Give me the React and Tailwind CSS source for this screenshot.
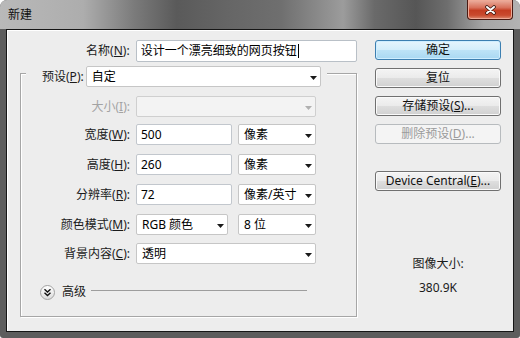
import React from "react";

function Key({ children }) {
  return <span className="underline underline-offset-[1px]">{children}</span>;
}

function Arrow({ disabled }) {
  return (
    <svg width="7" height="4" viewBox="0 0 7 4" className="mt-[2px] shrink-0">
      <path d="M0 0H7L3.5 4Z" fill={disabled ? "#b0b0b0" : "#1a1a1a"} />
    </svg>
  );
}

function Select({ className = "", children, disabled }) {
  return (
    <div
      className={`flex h-[21px] items-center justify-between rounded-[2px] border pl-[5px] pr-[3px] ${
        disabled ? "border-[#cfcfcf] bg-[#f3f3f3]" : "border-[#c6c6c6] bg-white"
      } ${className}`}
    >
      <span className="whitespace-nowrap">{children}</span>
      <Arrow disabled={disabled} />
    </div>
  );
}

function Field({ className = "", children }) {
  return (
    <div
      className={`flex h-[21px] items-center rounded-[2px] border border-[#c2c7cd] bg-white pl-[4px] ${className}`}
    >
      {children}
    </div>
  );
}

function Row({ label, disabled, className = "", children }) {
  return (
    <div className={`flex h-[21px] items-center ${className}`}>
      <div
        className={`w-[109px] whitespace-nowrap text-right ${
          disabled ? "text-[#a3a3a3]" : "text-[#1b1b1b]"
        }`}
      >
        {label}
      </div>
      <div className="ml-[6px] flex items-center">{children}</div>
    </div>
  );
}

function Button({ variant = "normal", className = "", children }) {
  const look = {
    primary:
      "border-[#3c7fb1] bg-[linear-gradient(#e6f5fd_0%,#d4eefb_48%,#bde3f7_52%,#a9d8f2_100%)] shadow-[inset_0_0_0_1px_#cfeeff] text-[#111]",
    normal:
      "border-[#707070] bg-[linear-gradient(#f4f4f4_0%,#ebebeb_48%,#dedede_52%,#d0d0d0_100%)] shadow-[inset_0_0_0_1px_#fafafa] text-[#111]",
    disabled: "border-[#b7bbbe] bg-[#f4f4f4] text-[#9b9b9b]",
  };
  return (
    <div
      className={`flex h-[20px] w-[126px] items-center justify-center rounded-[3px] border leading-[16px] ${look[variant]} ${className}`}
    >
      {children}
    </div>
  );
}

export default function App() {
  return (
    <div className="h-[338px] w-[520px] bg-white font-['Noto_Sans','Noto_Sans_CJK_SC',sans-serif] text-[12px] leading-[16px]">
      <div className="flex h-full flex-col overflow-hidden rounded-t-[7px] rounded-b-[3px] bg-[#5d5d5d]">
        {/* title bar */}
        <div className="flex h-[29px] shrink-0 items-start justify-between bg-[linear-gradient(90deg,#b9b9b9_0%,#adadad_16%,#7a7a7a_26%,#5a5a5a_34%,#666666_44%,#6f6f6f_54%,#9c9c9c_66%,#6a6a6a_72%,#565656_80%,#6e6e6e_86%,#a6a6a6_93%,#b3b3b3_100%)]">
          <div className="pl-[8px] pt-[7px] text-[#111]">新建</div>
          <div className="mr-[7px] flex h-[20px] w-[46px] items-center justify-center rounded-b-[4px] border border-t-0 border-[#4a1a12] bg-[linear-gradient(#ecb1a1_0%,#d8705a_40%,#c43d22_55%,#c94a2e_80%,#dc8a70_100%)] shadow-[inset_0_0_0_1px_#eea996]">
            <svg width="11" height="10" viewBox="0 0 11 10">
              <path d="M2 2L9 8M9 2L2 8" stroke="#3b1a14" strokeWidth="3.6" strokeLinecap="round" />
              <path d="M2 2L9 8M9 2L2 8" stroke="#ffffff" strokeWidth="2" strokeLinecap="round" />
            </svg>
          </div>
        </div>

        {/* frame body */}
        <div className="flex flex-1 px-[6px] pb-[6px]">
          <div className="flex flex-1 border border-[#161616] bg-[#ededed] shadow-[inset_1px_1px_0_#ffffff]">
            {/* left side */}
            <div className="flex w-[350px] flex-col">
              <div className="mt-[10px] flex h-[22px] items-center">
                <div className="w-[123px] text-right text-[#1b1b1b]">
                  名称(<Key>N</Key>):
                </div>
                <div className="ml-[6px] flex h-[22px] w-[222px] items-center rounded-[2px] border border-[#b9c0c7] bg-white pl-[4px]">
                  <span className="whitespace-nowrap">设计一个漂亮细致的网页按钮</span>
                  <span className="ml-px h-[14px] w-px bg-black" />
                </div>
              </div>

              {/* group box */}
              <div className="ml-[13px] mt-[11px] flex h-[244px] w-[337px] flex-col border border-[#a6a6a6] shadow-[1px_1px_0_#ffffff,inset_1px_1px_0_#ffffff]">
                <div className="-mt-[8px] ml-[5px] flex w-[301px] items-center bg-[#ededed] pl-[16px]">
                  <span className="whitespace-nowrap text-[#1b1b1b]">
                    预设(<Key>P</Key>):
                  </span>
                  <Select className="ml-[2px] w-[235px]">自定</Select>
                </div>

                <Row label={<>大小(<Key>I</Key>):</>} disabled className="mt-[9px]">
                  <Select disabled className="w-[180px]" />
                </Row>

                <Row label={<>宽度(<Key>W</Key>):</>} className="mt-[7px]">
                  <Field className="w-[96px]">500</Field>
                  <Select className="ml-[6px] w-[78px]">像素</Select>
                </Row>

                <Row label={<>高度(<Key>H</Key>):</>} className="mt-[9px]">
                  <Field className="w-[96px]">260</Field>
                  <Select className="ml-[6px] w-[78px]">像素</Select>
                </Row>

                <Row label={<>分辨率(<Key>R</Key>):</>} className="mt-[9px]">
                  <Field className="w-[96px]">72</Field>
                  <Select className="ml-[6px] w-[78px]">像素/英寸</Select>
                </Row>

                <Row label={<>颜色模式(<Key>M</Key>):</>} className="mt-[9px]">
                  <Select className="w-[92px]">RGB 颜色</Select>
                  <Select className="ml-[10px] w-[78px]">8 位</Select>
                </Row>

                <Row label={<>背景内容(<Key>C</Key>):</>} className="mt-[8px]">
                  <Select className="w-[180px]">透明</Select>
                </Row>

                <div className="ml-[19px] mt-[20px] flex items-center">
                  <div className="flex h-[15px] w-[15px] items-center justify-center rounded-full border border-[#a2a2a2] bg-[linear-gradient(#ffffff,#dcdcdc)]">
                    <svg width="9" height="9" viewBox="0 0 9 9">
                      <path d="M1.5 1.2L4.5 4L7.5 1.2M1.5 4.8L4.5 7.6L7.5 4.8" fill="none" stroke="#111" strokeWidth="1.4" />
                    </svg>
                  </div>
                  <span className="ml-[7px] text-[#1b1b1b]">高级</span>
                  <div className="mb-[3px] ml-[5px] h-px w-[216px] bg-[#9d9d9d]" />
                </div>
              </div>
            </div>

            {/* right side */}
            <div className="ml-[18px] mt-[10px] flex w-[126px] flex-col items-center">
              <Button variant="primary">确定</Button>
              <Button className="mt-[8px]">复位</Button>
              <Button className="mt-[8px]">
                存储预设(<Key>S</Key>)...
              </Button>
              <Button variant="disabled" className="mt-[8px]">
                删除预设(<Key>D</Key>)...
              </Button>
              <Button className="mt-[27px]">
                Device Central(<Key>E</Key>)...
              </Button>
              <div className="mt-[65px] text-[#1b1b1b]">图像大小:</div>
              <div className="mt-[8px] text-[#1b1b1b]">380.9K</div>
            </div>
          </div>
        </div>
      </div>
    </div>
  );
}
